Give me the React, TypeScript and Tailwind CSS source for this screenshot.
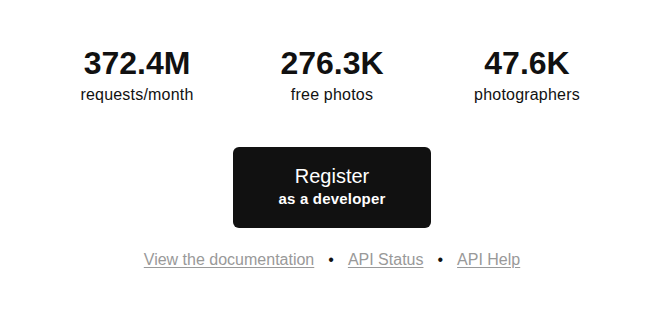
import React from "react"

const stats = [
  { value: "372.4M", label: "requests/month" },
  { value: "276.3K", label: "free photos" },
  { value: "47.6K", label: "photographers" },
]

export default function App() {
  return (
    <div
      className="flex h-[319px] w-[656px] flex-col items-center bg-white pl-[8px] text-[#111]"
      style={{ fontFamily: "'Liberation Sans', Arial, sans-serif" }}
    >
      {/* Stats */}
      <div className="mt-[44px] flex">
        {stats.map((s) => (
          <div key={s.label} className="flex w-[195px] flex-col items-center">
            <div className="text-[32px] font-bold leading-[38px]">{s.value}</div>
            <div className="mt-[3px] text-[16px] leading-[19px] tracking-[0.2px]">{s.label}</div>
          </div>
        ))}
      </div>

      {/* CTA */}
      <a
        href="#"
        className="mt-[43px] flex h-[81px] w-[198px] flex-col items-center justify-center rounded-[6px] bg-[#111] pb-[3px] text-white"
      >
        <span className="text-[20px] leading-[24px]">Register</span>
        <span className="mt-[2px] text-[15px] font-semibold leading-[18px] tracking-[0.2px]">as a developer</span>
      </a>

      {/* Links */}
      <div className="mt-[22px] flex items-center gap-[14px] text-[16px] leading-[19px]">
        <a href="#" className="text-[#999] underline underline-offset-2">View the documentation</a>
        <span className="text-[#111]">•</span>
        <a href="#" className="text-[#999] underline underline-offset-2">API Status</a>
        <span className="text-[#111]">•</span>
        <a href="#" className="text-[#999] underline underline-offset-2">API Help</a>
      </div>
    </div>
  )
}
